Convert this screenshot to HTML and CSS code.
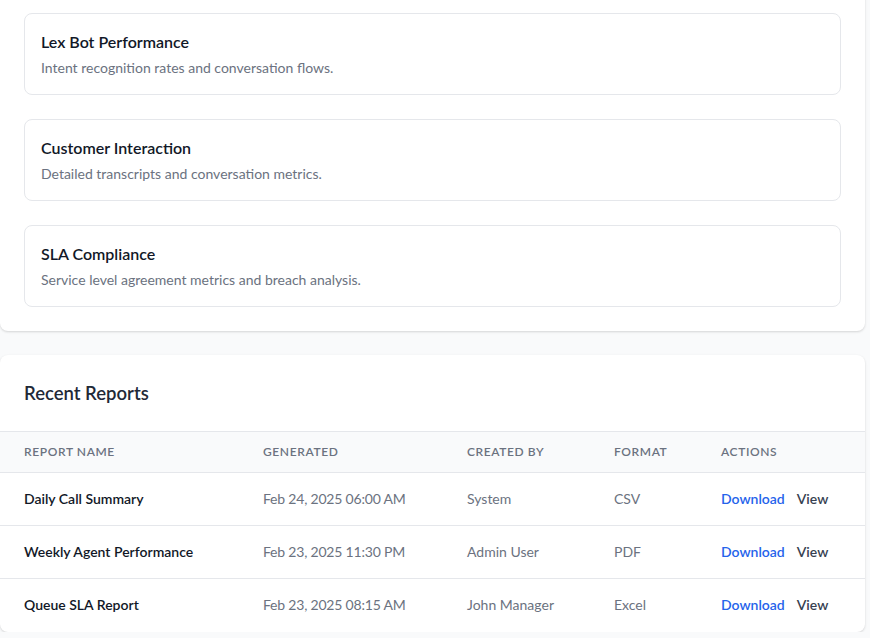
FILE: index.html
```html
<!DOCTYPE html>
<html lang="en">
<head>
<meta charset="utf-8">
<title>Reports</title>
<link rel="stylesheet" href="styles.css">
</head>
<body>
<main class="page">
  <section class="panel panel-types">
    <div class="type-list">
      <div class="type-card">
        <h3 class="type-title">Lex Bot Performance</h3>
        <p class="type-desc">Intent recognition rates and conversation flows.</p>
      </div>
      <div class="type-card">
        <h3 class="type-title">Customer Interaction</h3>
        <p class="type-desc">Detailed transcripts and conversation metrics.</p>
      </div>
      <div class="type-card">
        <h3 class="type-title">SLA Compliance</h3>
        <p class="type-desc">Service level agreement metrics and breach analysis.</p>
      </div>
    </div>
  </section>

  <section class="panel panel-recent">
    <header class="panel-header">
      <h2 class="panel-title">Recent Reports</h2>
    </header>
    <table class="reports">
      <thead>
        <tr>
          <th class="col-name">Report Name</th>
          <th class="col-gen">Generated</th>
          <th class="col-by">Created By</th>
          <th class="col-fmt">Format</th>
          <th class="col-act">Actions</th>
        </tr>
      </thead>
      <tbody>
        <tr>
          <td class="name">Daily Call Summary</td>
          <td class="date">Feb 24, 2025 06:00 AM</td>
          <td>System</td>
          <td>CSV</td>
          <td><a class="act act-dl" href="#">Download</a><a class="act act-view" href="#">View</a></td>
        </tr>
        <tr>
          <td class="name">Weekly Agent Performance</td>
          <td class="date">Feb 23, 2025 11:30 PM</td>
          <td>Admin User</td>
          <td>PDF</td>
          <td><a class="act act-dl" href="#">Download</a><a class="act act-view" href="#">View</a></td>
        </tr>
        <tr>
          <td class="name">Queue SLA Report</td>
          <td class="date">Feb 23, 2025 08:15 AM</td>
          <td>John Manager</td>
          <td>Excel</td>
          <td><a class="act act-dl" href="#">Download</a><a class="act act-view" href="#">View</a></td>
        </tr>
      </tbody>
    </table>
  </section>
</main>
</body>
</html>
```
FILE: styles.css
```css
* { box-sizing: border-box; }
html, body { margin: 0; padding: 0; }
body {
  background: #f9fafb;
  font-family: "Lato", "Noto Sans", sans-serif;
  color: #111827;
  overflow: hidden;
}
.page {
  width: 865px;
  margin-top: -24px;
  display: flex;
  flex-direction: column;
  gap: 24px;
}
.panel {
  background: #fff;
  border-radius: 8px;
  box-shadow: 0 1px 3px rgba(0,0,0,0.1), 0 1px 2px rgba(0,0,0,0.06);
}
.panel-types {
  padding: 37px 24px 24px;
}
.type-list {
  display: flex;
  flex-direction: column;
  gap: 24px;
}
.type-card {
  border: 1px solid #e5e7eb;
  border-radius: 8px;
  padding: 16px 16px 15px;
  height: 82px;
}
.type-title {
  margin: 0;
  font-size: 16px;
  font-weight: 600;
  line-height: 24px;
  color: #111827;
}
.type-desc {
  margin: 4px 0 0;
  font-size: 14px;
  line-height: 20px;
  color: #6b7280;
}
.panel-header {
  padding: 24px;
  border-bottom: 1px solid #e5e7eb;
}
.panel-title {
  margin: 0;
  font-size: 18.5px;
  font-weight: 600;
  line-height: 28px;
  color: #1f2937;
}
.reports {
  width: 100%;
  border-collapse: collapse;
  table-layout: fixed;
}
.reports th {
  background: #f9fafb;
  text-align: left;
  font-size: 12px;
  font-weight: 600;
  letter-spacing: 0.05em;
  text-transform: uppercase;
  color: #6b7280;
  padding: 10px 24px;
  line-height: 20px;
  height: 40px;
  border-bottom: 1px solid #e5e7eb;
}
.col-name { width: 239px; }
.col-gen { width: 204px; }
.col-by { width: 147px; }
.col-fmt { width: 107px; }
.reports td {
  padding: 16px 24px;
  font-size: 14px;
  line-height: 20px;
  color: #6b7280;
  border-bottom: 1px solid #e5e7eb;
  height: 53px;
  white-space: nowrap;
}
.reports td.date { letter-spacing: -0.2px; }
.reports tbody tr:last-child td { border-bottom: none; }
.reports td.name {
  color: #111827;
  font-weight: 600;
}
.act {
  font-weight: 600;
  text-decoration: none;
}
.act-dl { color: #2563eb; margin-right: 12px; }
.act-view { color: #374151; }
```
